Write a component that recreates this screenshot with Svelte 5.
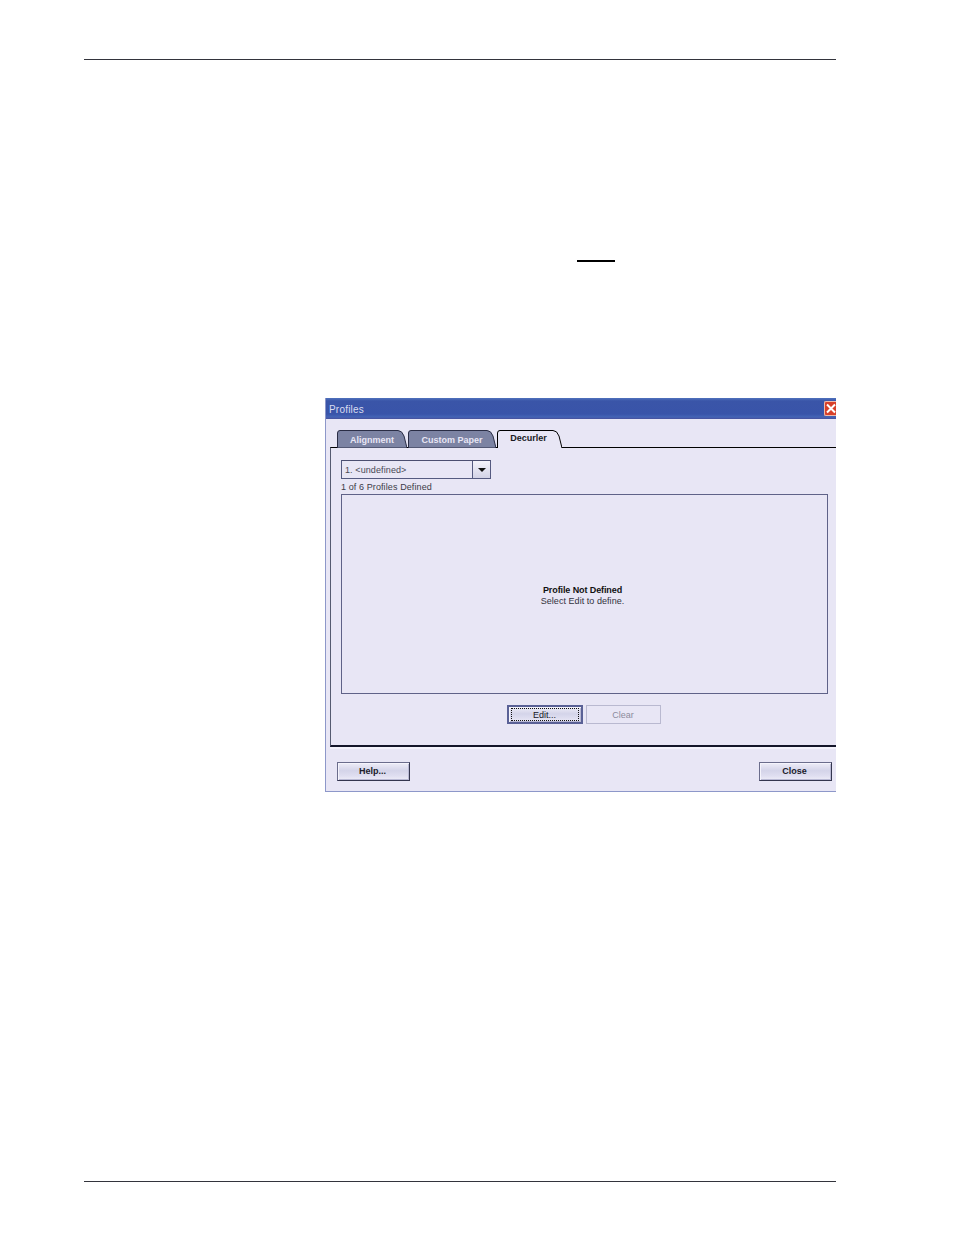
<script>
  const tabs = [
    { label: 'Alignment', width: 70, active: false },
    { label: 'Custom Paper', width: 88, active: false },
    { label: 'Decurler', width: 65, active: true }
  ];

  function tabPath(w, h) {
    return `M0.5 ${h} V3 Q0.5 0.5 3 0.5 H${w - 9} Q${w - 5} 0.5 ${w - 3} 6 L${w} ${h}`;
  }
</script>

<div class="page">
  <div class="rule top-rule"></div>
  <div class="blank"></div>

  <div class="dialog">
    <div class="titlebar">
      <span>Profiles</span>
      <div class="close-x">
        <svg width="12" height="15" viewBox="0 0 12 15">
          <path d="M3 3.5 L11 11.5 M11 3.5 L3 11.5" stroke="#fff" stroke-width="2" fill="none" />
        </svg>
      </div>
    </div>

    <div class="body">
      <div class="tabs">
        {#each tabs as tab}
          <div class="tab" class:active={tab.active} style="width: {tab.width}px">
            <svg width={tab.width} height="18" viewBox="0 0 {tab.width} 18">
              <path
                d="{tabPath(tab.width, 18)} {tab.active ? '' : 'Z'}"
                fill={tab.active ? '#e8e6f5' : '#7c83a3'}
                stroke={tab.active ? '#000' : '#2a2d45'}
              />
            </svg>
            <span>{tab.label}</span>
          </div>
        {/each}
      </div>

      <div class="panel">
        <div class="select">
          <div class="select-value">1. &lt;undefined&gt;</div>
          <div class="select-arrow"><i></i></div>
        </div>
        <div class="count">1 of 6 Profiles Defined</div>
        <div class="box">
          <strong>Profile Not Defined</strong>
          <span>Select Edit to define.</span>
        </div>
        <div class="actions">
          <button class="btn focused"><span>Edit...</span></button>
          <button class="btn disabled" disabled>Clear</button>
        </div>
      </div>

      <div class="footer">
        <button class="btn help">Help...</button>
        <button class="btn close">Close</button>
      </div>
    </div>
  </div>

  <div class="rule bottom-rule"></div>
</div>

<style>
  :global(body) {
    margin: 0;
    background: #fff;
  }

  .page {
    width: 752px;
    height: 1235px;
    margin-left: 84px;
    font-family: "Liberation Sans", Arial, sans-serif;
    overflow: hidden;
  }

  .rule {
    height: 1px;
    background: #33343c;
  }

  .top-rule {
    margin-top: 59px;
  }

  .blank {
    width: 38px;
    height: 2px;
    margin: 200px 0 0 493px;
    background: #000;
  }

  .dialog {
    width: 511px;
    height: 394px;
    margin: 136px 0 0 241px;
    box-sizing: border-box;
    display: flex;
    flex-direction: column;
    overflow: hidden;
    background: #e8e6f5;
    border-left: 1px solid #8d97c9;
    border-bottom: 1px solid #8d97c9;
  }

  .titlebar {
    flex: none;
    height: 21px;
    box-sizing: border-box;
    padding: 1px 0 0 3px;
    display: flex;
    align-items: center;
    justify-content: space-between;
    background: linear-gradient(#4f72bd 0, #3a55a8 3px, #3954a9 16px, #4464b6 19px, #47509c 21px);
    color: #d9dcf0;
    font-size: 10px;
    letter-spacing: 0.2px;
  }

  .close-x {
    width: 12px;
    height: 15px;
    margin-top: -1px;
    box-sizing: border-box;
    border: 1px solid #efb9a8;
    border-right: 0;
    border-radius: 2px 0 0 2px;
    background: #d8402a;
    overflow: hidden;
  }

  .close-x svg {
    display: block;
    margin: -1px 0 0 -1px;
  }

  .body {
    flex: 1;
    display: flex;
    flex-direction: column;
    padding: 11px 0 0 4px;
  }

  .tabs {
    flex: none;
    display: flex;
    height: 18px;
    padding-left: 7px;
    margin-bottom: -1px;
    position: relative;
    z-index: 1;
  }

  .tab {
    position: relative;
    height: 18px;
    margin-right: 1px;
    flex: none;
  }

  .tab svg {
    position: absolute;
    inset: 0;
    display: block;
  }

  .tab span {
    position: relative;
    display: block;
    text-align: center;
    line-height: 20px;
    font-size: 9px;
    font-weight: bold;
    color: #e8e6f5;
  }

  .tab.active span {
    padding-right: 2px;
    color: #1a1a22;
    line-height: 17px;
  }

  .panel {
    flex: none;
    height: 300px;
    box-sizing: border-box;
    padding: 12px 8px 0 10px;
    border-top: 1px solid #000;
    border-left: 1px solid #555a70;
    border-bottom: 2px solid #14162a;
  }

  .select {
    width: 150px;
    height: 19px;
    box-sizing: border-box;
    display: flex;
    border: 1px solid #555a80;
    border-top-color: #4b4e70;
    background: #e8e6f5;
  }

  .select-value {
    flex: 1;
    padding-left: 3px;
    font-size: 9px;
    line-height: 18px;
    color: #4a4a55;
    letter-spacing: 0.1px;
  }

  .select-arrow {
    width: 17px;
    display: flex;
    align-items: center;
    justify-content: center;
    border-left: 1px solid #555a80;
    background: linear-gradient(#f4f3fb, #d3d3e6);
  }

  .select-arrow i {
    width: 0;
    height: 0;
    border-left: 4px solid transparent;
    border-right: 4px solid transparent;
    border-top: 4px solid #111;
  }

  .count {
    height: 15px;
    font-size: 9px;
    line-height: 16px;
    color: #3c3c48;
    letter-spacing: 0.1px;
  }

  .box {
    width: 487px;
    height: 200px;
    box-sizing: border-box;
    display: flex;
    flex-direction: column;
    align-items: center;
    justify-content: center;
    border: 1px solid #5f6288;
    font-size: 9px;
    line-height: 11px;
    color: #33333d;
    padding: 3px 4px 0 0;
    letter-spacing: 0.05px;
  }

  .box strong {
    color: #111;
    letter-spacing: -0.1px;
  }

  .actions {
    display: flex;
    justify-content: center;
    gap: 3px;
    margin-top: 11px;
    padding-right: 2px;
  }

  .btn {
    width: 76px;
    height: 19px;
    padding: 0;
    box-sizing: border-box;
    font-family: inherit;
    font-size: 9px;
    font-weight: normal;
    color: #16161e;
    border: 1px solid #6b6d8c;
    border-right-color: #34364f;
    border-bottom-color: #34364f;
    box-shadow: inset 1px 1px 0 #f5f4fc, inset -1px -1px 0 #b9b9d4;
    background: linear-gradient(#eeedf8, #d4d4e9 45%, #dfdef0 75%, #eeedf8);
  }

  .btn.focused {
    border: 2px solid #5a6196;
    padding: 1px 2px;
  }

  .btn.focused span {
    display: block;
    height: 100%;
    line-height: 12px;
    border: 1px dotted #111;
    box-sizing: border-box;
  }

  .btn.disabled {
    width: 75px;
    color: #8b8b9c;
    border-color: #b9b9d0;
    box-shadow: none;
    background: #e8e6f5;
  }

  .footer {
    flex: 1;
    display: flex;
    justify-content: space-between;
    padding: 13px 0 0 7px;
    border-top: 2px solid #f3f2fb;
    align-items: flex-start;
  }

  .btn.help,
  .btn.close {
    width: 73px;
    padding: 0 2px 2px 0;
    font-weight: bold;
    color: #20202a;
  }

  .btn.close {
    margin-right: 4px;
  }

  .bottom-rule {
    margin-top: 389px;
  }
</style>
